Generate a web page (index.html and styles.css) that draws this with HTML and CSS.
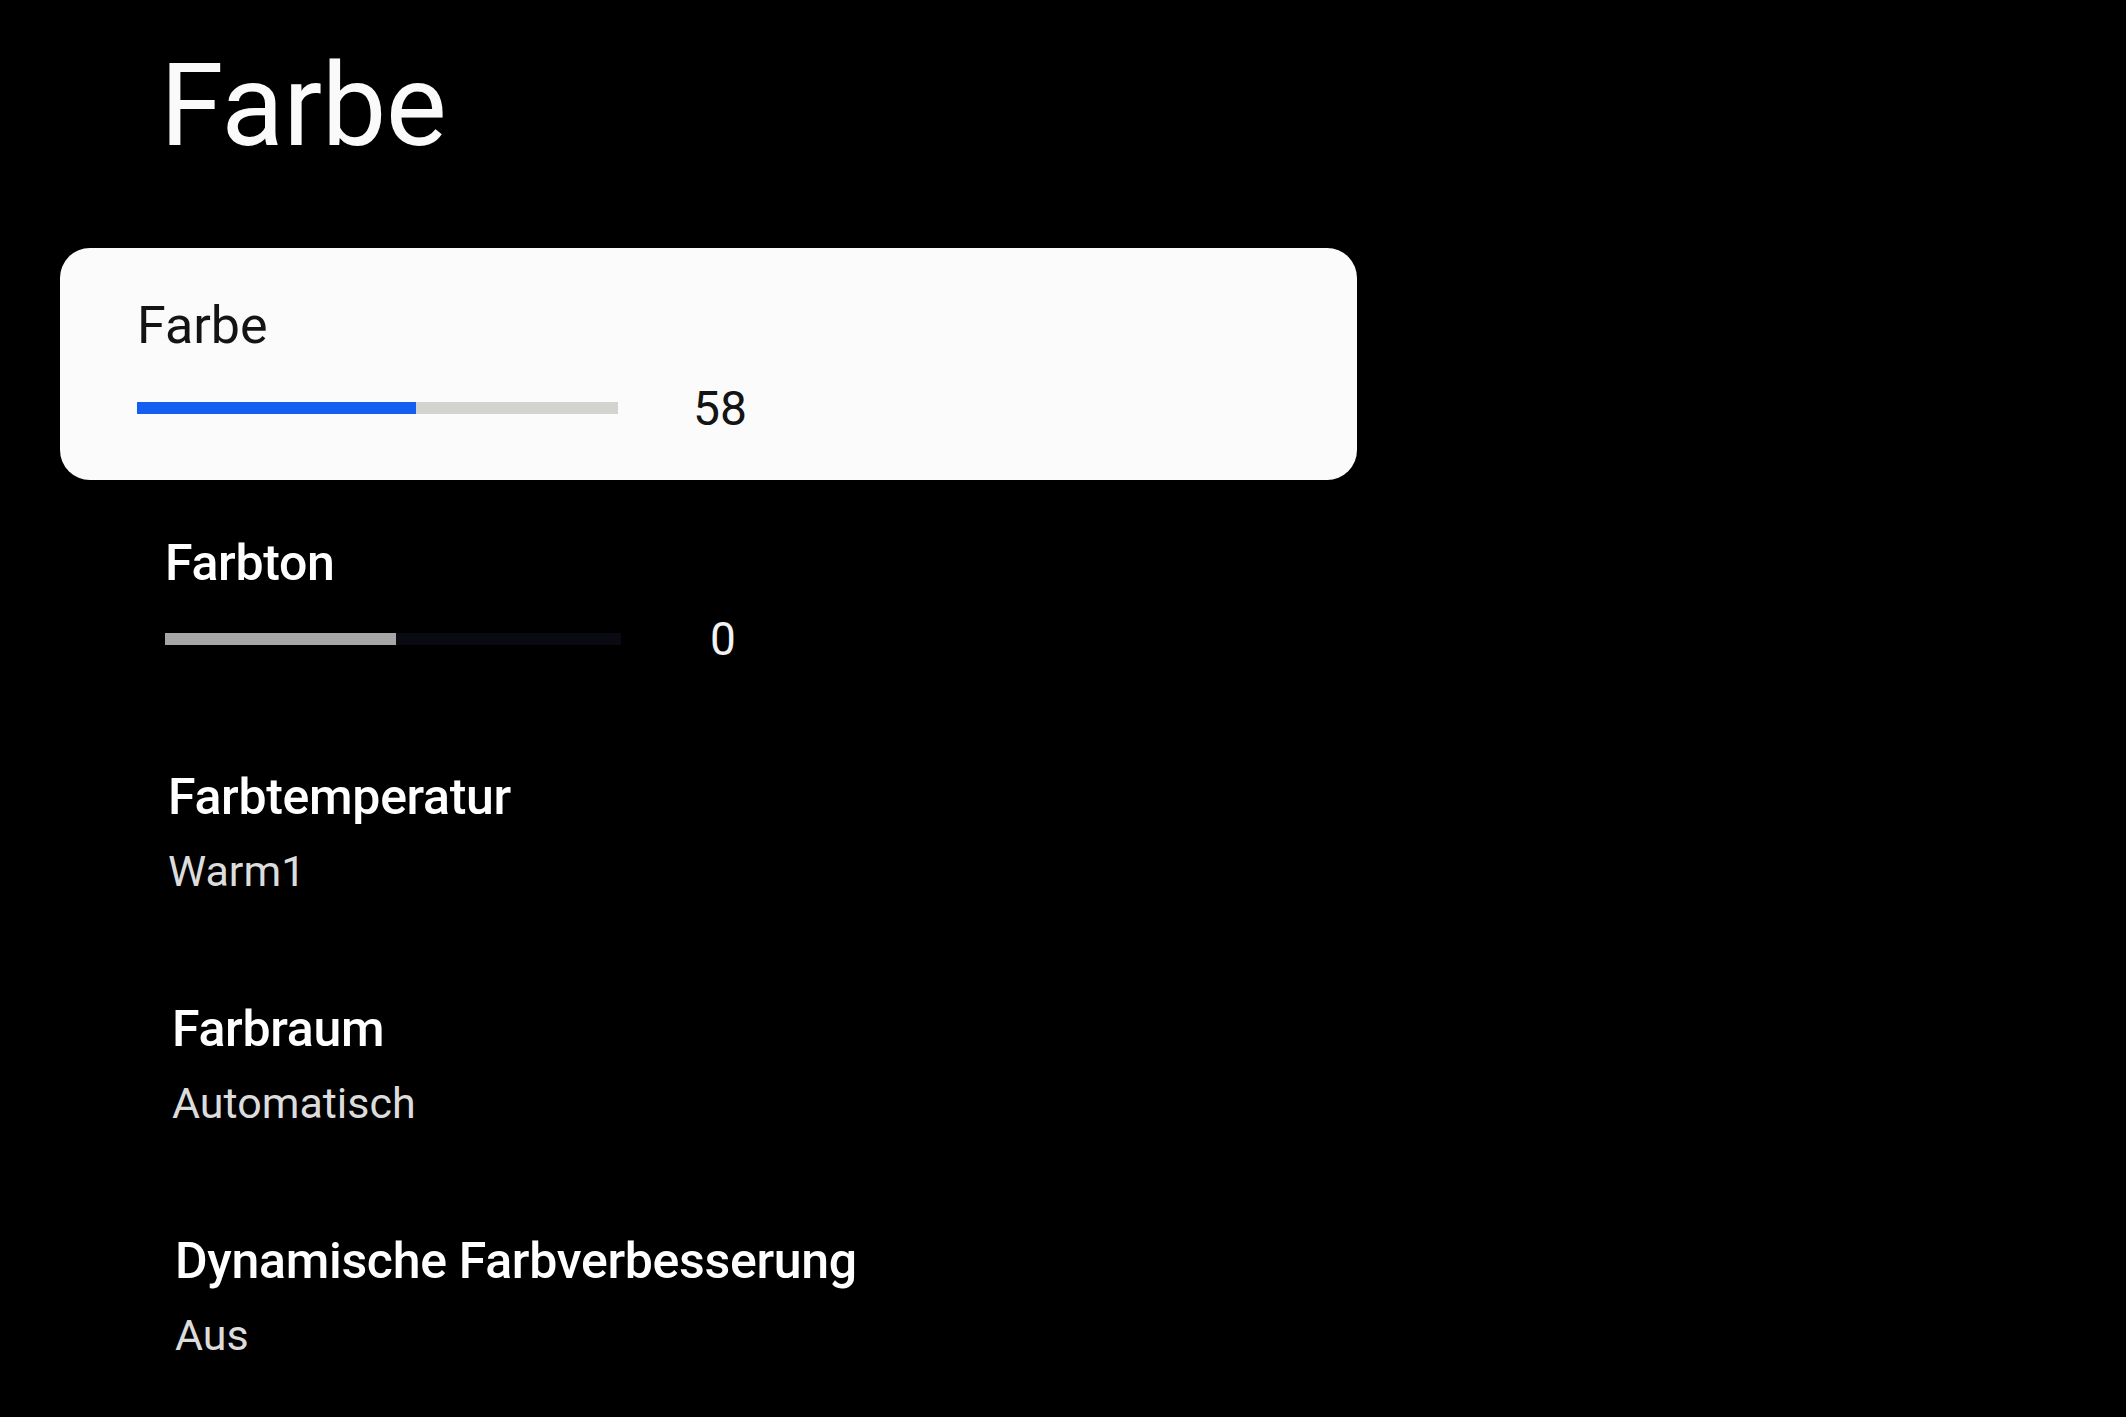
FILE: index.html
```html
<!DOCTYPE html>
<html lang="de">
<head>
<meta charset="utf-8">
<title>Farbe</title>
<link rel="stylesheet" href="styles.css">
</head>
<body>
<main class="page">
  <h1 class="page-title">Farbe</h1>
  <ul class="menu">
    <li class="item item--focused">
      <div class="item-title">Farbe</div>
      <div class="slider">
        <div class="track track--light"><div class="fill fill--blue" style="width:58%"></div></div>
        <div class="value">58</div>
      </div>
    </li>
    <li class="item item--slider">
      <div class="item-title">Farbton</div>
      <div class="slider">
        <div class="track track--dark"><div class="fill fill--gray" style="width:50.6%"></div></div>
        <div class="value">0</div>
      </div>
    </li>
    <li class="item">
      <div class="item-title">Farbtemperatur</div>
      <div class="item-sub">Warm1</div>
    </li>
    <li class="item item--shift1">
      <div class="item-title">Farbraum</div>
      <div class="item-sub">Automatisch</div>
    </li>
    <li class="item item--shift2">
      <div class="item-title">Dynamische Farbverbesserung</div>
      <div class="item-sub">Aus</div>
    </li>
  </ul>
</main>
</body>
</html>
```
FILE: styles.css
```css
html, body {
  margin: 0;
  padding: 0;
  background: #000;
}
body {
  width: 2126px;
  height: 1417px;
  overflow: hidden;
  font-family: Roboto, "Noto Sans", Arial, sans-serif;
  color: #fff;
}
.page {
  padding: 48px 0 0 60px;
  width: 1297px;
}
.page-title {
  margin: 0 0 84px 0;
  padding-left: 100px;
  font-size: 115px;
  font-weight: 400;
  line-height: 116px;
  height: 116px;
  letter-spacing: -0.5px;
  color: #fafafa;
}
.menu {
  list-style: none;
  margin: 0;
  padding: 0;
  display: flex;
  flex-direction: column;
}
.item {
  box-sizing: border-box;
  height: 232px;
  padding: 56px 0 0 108px;
}
.item--shift1 {
  padding-left: 112px;
}
.item--shift2 {
  padding-left: 115px;
}
.item-title {
  font-size: 50px;
  font-weight: 500;
  line-height: 58px;
  color: #fff;
  letter-spacing: -0.3px;
}
.item-sub {
  margin-top: 20px;
  font-size: 43px;
  font-weight: 400;
  line-height: 50px;
  color: #dcdcdc;
}
.slider {
  display: flex;
  align-items: center;
  height: 40px;
}
.track {
  position: relative;
  height: 12px;
}
.fill {
  height: 100%;
}
.value {
  width: 90px;
  margin-left: 57px;
  text-align: center;
  font-weight: 400;
}

/* focused card */
.item--focused {
  background: #fbfbfb;
  border-radius: 30px;
  padding: 48px 0 0 77px;
}
.item--focused .item-title {
  font-size: 52px;
  font-weight: 400;
  line-height: 60px;
  color: #141414;
  letter-spacing: 0;
}
.item--focused .slider {
  margin-top: 32px;
}
.item--focused .value {
  font-size: 48px;
  color: #141414;
}
.track--light {
  width: 481px;
  background: #d3d3cf;
}
.fill--blue {
  background: #145ef2;
}

/* slider row (unfocused) */
.item--slider {
  padding-top: 54px;
  padding-left: 105px;
}
.item--slider .slider {
  margin-top: 27px;
}
.item--slider .value {
  font-size: 46px;
  color: #f2f2f2;
}
.track--dark {
  width: 456px;
  background: #0a0a12;
}
.fill--gray {
  background: #a6a6a6;
}
```
